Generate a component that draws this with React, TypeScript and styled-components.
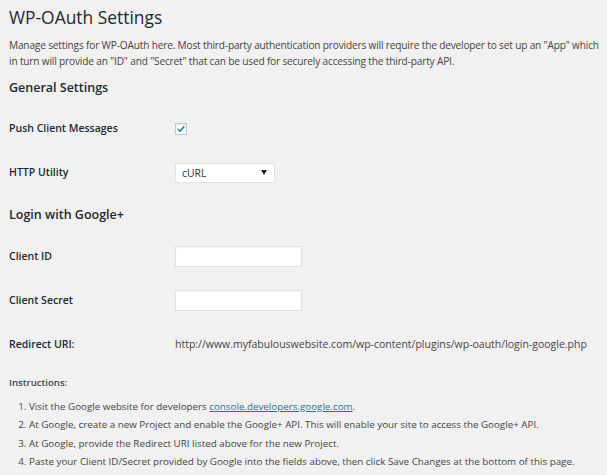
import React from "react";
import styled, { createGlobalStyle } from "styled-components";

const Global = createGlobalStyle`
  html, body { margin: 0; padding: 0; background: #f1f1f1; }
  body { font-family: "Open Sans", "Liberation Sans", sans-serif; color: #444; }
`;

const Page = styled.div`
  padding: 5px 9px 0 9px;
  width: 607px;
  height: 475px;
  box-sizing: border-box;
  overflow: hidden;
`;

const Title = styled.h1`
  margin: 0;
  font-size: 17.4px;
  font-weight: 400;
  line-height: 24px;
  color: #23282d;
`;

const Intro = styled.p`
  margin: 8px -4px 0 0;
  font-size: 10.1px;
  letter-spacing: -0.16px;
  line-height: 16px;
  color: #444;
`;

const Section = styled.h2<{ $h: number }>`
  margin: 0;
  height: ${(p) => p.$h}px;
  display: flex;
  align-items: center;
  font-size: 12.5px;
  font-weight: 600;
  color: #23282d;
`;

const Row = styled.div`
  display: grid;
  grid-template-columns: 166px 1fr;
  align-items: center;
  height: 44px;
`;

const Label = styled.div`
  font-size: 10.5px;
  font-weight: 600;
  color: #23282d;
`;

const Value = styled.div`
  font-size: 10.5px;
  color: #444;
  display: flex;
  align-items: center;
`;

const Check = styled.span`
  width: 12px;
  height: 12px;
  box-sizing: border-box;
  border: 1px solid #c4c4c4;
  background: #fff;
  box-shadow: inset 0 1px 2px rgba(0, 0, 0, 0.1);
  display: inline-flex;
  align-items: center;
  justify-content: center;
  margin-top: 1px;
`;

const Select = styled.div`
  width: 100px;
  height: 20px;
  box-sizing: border-box;
  border: 1px solid #e2e2e2;
  background: #fff;
  display: flex;
  align-items: center;
  justify-content: space-between;
  padding: 0 7px 0 6px;
  font-size: 10.4px;
  color: #333;
  margin-top: 1px;
`;

const Arrow = styled.span`
  width: 0;
  height: 0;
  border-left: 3px solid transparent;
  border-right: 3px solid transparent;
  border-top: 5px solid #222;
`;

const Input = styled.div`
  width: 127px;
  height: 21px;
  box-sizing: border-box;
  border: 1px solid #e0e0e0;
  background: #fff;
  box-shadow: inset 0 1px 1px rgba(0, 0, 0, 0.04);
  margin-top: 1px;
`;

const Instructions = styled.div`
  margin-top: 10px;
  font-size: 9.6px;
  line-height: 14px;
  font-weight: 600;
  color: #444;
`;

const List = styled.ol`
  margin: 8px 0 0 0;
  padding: 0 0 0 20px;
  font-size: 9.8px;
  line-height: 18.3px;
  color: #444;
`;

const Item = styled.li`
  padding-left: 0;
`;

const Link = styled.a`
  color: #21759b;
  text-decoration: underline;
`;

export default function App() {
  return (
    <>
      <Global />
      <Page>
        <Title>WP-OAuth Settings</Title>
        <Intro>
          Manage settings for WP-OAuth here. Most third-party authentication providers will require the developer to set up an "App" which in turn will provide an "ID" and "Secret" that can be used for securely accessing the third-party API.
        </Intro>
        <Section $h={37}>General Settings</Section>
        <Row>
          <Label>Push Client Messages</Label>
          <Value>
            <Check>
              <svg width="10" height="10" viewBox="0 0 10 10">
                <path d="M2 5.2 L4.1 7.3 L8.2 2.4" fill="none" stroke="#1e8cbe" strokeWidth="1.7" />
              </svg>
            </Check>
          </Value>
        </Row>
        <Row>
          <Label>HTTP Utility</Label>
          <Value>
            <Select>
              <span>cURL</span>
              <Arrow />
            </Select>
          </Value>
        </Row>
        <Section $h={40}>Login with Google+</Section>
        <Row>
          <Label>Client ID</Label>
          <Value>
            <Input />
          </Value>
        </Row>
        <Row>
          <Label>Client Secret</Label>
          <Value>
            <Input />
          </Value>
        </Row>
        <Row>
          <Label>Redirect URI:</Label>
          <Value>http://www.myfabulouswebsite.com/wp-content/plugins/wp-oauth/login-google.php</Value>
        </Row>
        <Instructions>Instructions:</Instructions>
        <List>
          <Item>
            Visit the Google website for developers <Link href="#">console.developers.google.com</Link>.
          </Item>
          <Item>At Google, create a new Project and enable the Google+ API. This will enable your site to access the Google+ API.</Item>
          <Item>At Google, provide the Redirect URI listed above for the new Project.</Item>
          <Item>Paste your Client ID/Secret provided by Google into the fields above, then click Save Changes at the bottom of this page.</Item>
        </List>
      </Page>
    </>
  );
}
